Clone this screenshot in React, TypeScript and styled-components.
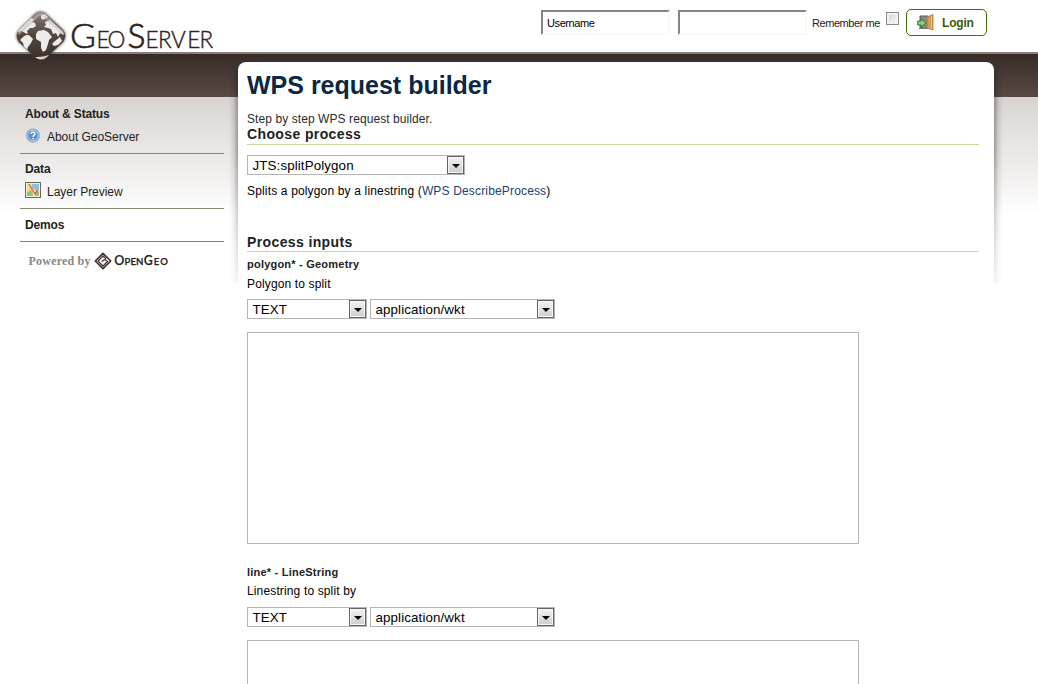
import React from "react";
import styled, { createGlobalStyle } from "styled-components";

const GlobalStyle = createGlobalStyle`
  body { margin: 0; background: #fff; font-family: "Liberation Sans", Arial, sans-serif; font-size: 12px; color: #222; }
  * { box-sizing: border-box; }
  h1, h2, h3, p { margin: 0; }
`;

const Page = styled.div`
  height: 684px;
  overflow: hidden;
  background: linear-gradient(#d8d3d0, #fff) 0 97px / 100% 118px no-repeat,
    linear-gradient(#372b28, #584943) 0 54px / 100% 43px no-repeat, #fff;
`;
const Header = styled.header`
  height: 54px;
  display: flex;
  justify-content: space-between;
  border-bottom: 2px solid #887d7a;
`;
const Logo = styled.svg`
  display: block;
  width: 230px;
  height: 70px;
  flex: none;
  position: relative;
`;
const LoginForm = styled.form`
  display: flex;
  align-items: flex-start;
  padding: 9px 51px 0 0;
`;
const Field = styled.input`
  width: 129px;
  height: 25px;
  margin: 1px 8px 0 0;
  padding: 1px 4px;
  border: 2px solid;
  border-color: #858585 #fafafa #fafafa #858585;
  background: #fff;
  font: 11px "Liberation Sans", Arial, sans-serif;
  letter-spacing: -0.4px;
  color: #000;
  outline: none;
`;
const Remember = styled.label`
  width: 74px;
  margin-left: -3px;
  line-height: 28px;
  font-size: 11px;
  letter-spacing: -0.43px;
  white-space: nowrap;
`;
const Check = styled.span`
  width: 13px;
  height: 13px;
  margin: 3px 7px 0 0;
  border: 1px solid #8e8888;
  background: linear-gradient(135deg, #c9cdd3, #fff);
  box-shadow: inset 0 0 0 2px #f1f1f1;
`;
const LoginButton = styled.button`
  width: 81px;
  height: 27px;
  padding: 0 0 0 10px;
  display: flex;
  align-items: center;
  gap: 7px;
  border: 1px solid #496a08;
  border-radius: 5px;
  background: #fff;
  color: #3d5c03;
  font: bold 12px "Liberation Sans", Arial, sans-serif;
  letter-spacing: -0.2px;
`;
const Body = styled.div`
  display: flex;
  align-items: flex-start;
`;
const Sidebar = styled.nav`
  width: 204px;
  margin: 43px 5px 0 20px;
`;
const Section = styled.section<{ $h: number; $top: number }>`
  height: ${(p) => p.$h}px;
  padding: ${(p) => p.$top}px 0 0 5px;
  border-bottom: 1px solid #83886f;
`;
const SectionTitle = styled.h3`
  font-size: 12px;
  line-height: 16px;
  letter-spacing: -0.15px;
`;
const NavItem = styled.a<{ $top: number }>`
  display: flex;
  align-items: center;
  height: 16px;
  margin-top: ${(p) => p.$top}px;
  gap: 6px;
  letter-spacing: -0.03px;
`;
const NavLabel = styled.span<{ $drop: number }>`
  line-height: 16px;
  padding-top: ${(p) => p.$drop * 2}px;
`;
const Powered = styled.svg`
  display: block;
  width: 160px;
  height: 24px;
  margin: 8px 0 0 5px;
`;
const Shade = styled.div<{ $side: "left" | "right" }>`
  width: 9px;
  height: 221px;
  margin-top: 8px;
  background: linear-gradient(to ${(p) => p.$side}, rgba(30, 24, 20, 0.36), rgba(30, 24, 20, 0.1) 50%, transparent);
  mask-image: linear-gradient(transparent, #000 16px, #000 90px, rgba(0, 0, 0, 0.15));
`;
const Panel = styled.main`
  width: 756px;
  height: 700px;
  margin-top: 8px;
  padding: 0 15px 0 9px;
  border-radius: 8px 8px 0 0;
  background: #fff;
`;
const Title = styled.h1`
  font-size: 25px;
  line-height: 46px;
  color: #0b2744;
`;
const Line = styled.p<{ $top: number; $dark?: boolean; $track?: number }>`
  margin-top: ${(p) => p.$top}px;
  line-height: 16px;
  letter-spacing: ${(p) => p.$track ?? 0.14}px;
  color: ${(p) => (p.$dark ? "#000" : "#2b2b2b")};
`;
const Heading = styled.h2<{ $top?: number; $line?: number }>`
  margin-top: ${(p) => p.$top ?? 0}px;
  height: 18px;
  line-height: ${(p) => p.$line ?? 17}px;
  font-size: 14px;
  letter-spacing: 0.38px;
  border-bottom: 1px solid #c6dd99;
`;
const Link = styled.a`
  color: #1b4175;
`;
const SelectBox = styled.div<{ $w: number }>`
  display: flex;
  width: ${(p) => p.$w}px;
  height: 20px;
  border: 1px solid #b5b5b5;
  background: #fff;
  color: #000;
  font-size: 13.33px;
  letter-spacing: 0.12px;
  line-height: 19px;
  padding-left: 4.5px;
  justify-content: space-between;
`;
const Arrow = styled.span`
  width: 17px;
  height: 18px;
  border: 1px solid #666;
  box-shadow: inset 0 0 0 1px #f7f7f7;
  background: linear-gradient(#f3f3f3, #cdcdcd);
  display: flex;
  align-items: center;
  justify-content: center;
  &::after {
    content: "";
    margin-top: 2px;
    border: 4px solid transparent;
    border-top-color: #000;
    border-bottom: 0;
  }
`;
const SelectRow = styled.div<{ $top: number }>`
  display: flex;
  gap: 3px;
  margin-top: ${(p) => p.$top}px;
`;
const Inputs = styled.div`
  padding-top: 5px;
`;
const Input = styled.section`
  height: 308px;
`;
const InputName = styled.h3`
  font-size: 11px;
  line-height: 15px;
  letter-spacing: 0.22px;
`;
const TextArea = styled.textarea`
  display: block;
  width: 612px;
  height: 212px;
  margin: 13px 0 0;
  border: 1px solid #b5b5b5;
  resize: none;
  outline: none;
`;

const Select = ({ width, value }: { width: number; value: string }) => (
  <SelectBox $w={width}>
    {value}
    <Arrow />
  </SelectBox>
);

const ProcessInput = ({ name, description, shift = 0 }: { name: string; description: string; shift?: number }) => (
  <Input>
    <InputName>{name}</InputName>
    <Line $top={4 - shift} $dark>{description}</Line>
    <SelectRow $top={7 + shift}>
      <Select width={120} value="TEXT" />
      <Select width={185} value="application/wkt" />
    </SelectRow>
    <TextArea />
  </Input>
);

const gem = "M35 14Q40.500 9.500 46 14L63 30Q67.500 35.500 63 42L47 57Q41 62 35 57L19 42Q14.500 35.500 19 30Z";

const GeoServerLogo = () => (
  <Logo viewBox="0 0 230 70">
    <defs>
      <linearGradient id="globe" x1="0" y1="0" x2="0" y2="1">
        <stop offset="0" stopColor="#8d8582" />
        <stop offset=".45" stopColor="#54463f" />
        <stop offset="1" stopColor="#362925" />
      </linearGradient>
      <filter id="soft" x="-20%" y="-20%" width="140%" height="140%">
        <feGaussianBlur stdDeviation="1.3" />
      </filter>
      <clipPath id="gem">
        <path d={gem} />
      </clipPath>
    </defs>
    <path d={gem} fill="#453a36" stroke="#453a36" strokeWidth="1.500" opacity=".65" filter="url(#soft)" />
    <g clipPath="url(#gem)">
      <path d="M10 8H70V66H10Z" fill="url(#globe)" />
      <path d="M18 30L31 18L34 19L32 22L35 23L36 26L33 28L30 28L27 31L28 34L25 33L22 31L18 32Z" fill="#eeecea" />
      <path d="M26 35L29 35L33 39L31 43L28 47L27 50L24 47L23 43L20 40L23 37Z" fill="#eeecea" />
      <path d="M41 15L45 14L48 17L46 18L43 20L41 18Z" fill="#eeecea" />
      <path d="M38 31L44 30L48 32L52 37L49 40L48 44L46 50L43 52L41 48L41 42L36 39L36 34Z" fill="#eeecea" />
      <path d="M44 27L46 25L45 22L50 20L62 31L64 35L60 33L58 37L56 33L53 34L51 29L48 28Z" fill="#eeecea" />
      <path d="M55 41L60 37L62 41L58 45L54 46L52 44Z" fill="#eeecea" />
      <path d="M35 57Q42 57.500 49 55L46 61H37Z" fill="#d6d2cf" />
      <path d="M18 34L38 15Q40.500 13 43 15L64 34" fill="none" stroke="#c3bfbd" strokeWidth="3.500" opacity=".5" />
    </g>
    <g fill="#30241f" stroke="#30241f" fontFamily="Lato" fontWeight="300">
      <text x="70" y="48" fontSize="33.500" strokeWidth=".6" textLength="26" lengthAdjust="spacingAndGlyphs">G</text>
      <text y="48" fontSize="22.500" strokeWidth=".4" x="96.500 107.500">EO</text>
      <text x="127.500" y="48" fontSize="33.500" strokeWidth=".8" textLength="18" lengthAdjust="spacingAndGlyphs">S</text>
      <text y="48" fontSize="22.500" strokeWidth=".4" x="145.500 158 170.900 187.300 199.500">ERVER</text>
    </g>
  </Logo>
);

export default function App() {
  return (
    <Page>
      <GlobalStyle />
      <Header>
        <GeoServerLogo />
        <LoginForm>
          <Field defaultValue="Username" />
          <Field />
          <Remember>Remember me</Remember>
          <Check />
          <LoginButton type="button">
            <svg width="18" height="17" viewBox="0 0 18 17">
              <path d="M3 2H11V14H3Z" fill="#8a8a86" stroke="#5e5e5b" />
              <path d="M2 14.500H12" stroke="#777" />
              <path d="M10 3L16 .5V16L10 14Z" fill="#d89b57" stroke="#ae7235" strokeWidth=".8" />
              <path d="M14.500 2V15" stroke="#f2c58c" />
              <path d="M.7 7H4V4.500L9 9L4 13.300V11H.7Z" fill="#8fcc7b" stroke="#35772d" />
            </svg>
            Login
          </LoginButton>
        </LoginForm>
      </Header>
      <Body>
        <Sidebar>
          <Section $h={57} $top={9}>
            <SectionTitle>About &amp; Status</SectionTitle>
            <NavItem $top={6}>
              <svg width="16" height="16" viewBox="0 0 16 16">
                <circle cx="8" cy="7.500" r="6.700" fill="#5b92cc" stroke="#a3bede" />
                <circle cx="8" cy="7.500" r="5.300" fill="none" stroke="#dfeaf7" strokeWidth=".8" />
                <path d="M6 6Q6.200 4.300 8 4.300T10 6Q9.800 7 8.200 7.800V9M8.200 9.900V11.200" fill="none" stroke="#fff" strokeWidth="1.400" />
              </svg>
              <NavLabel $drop={1}>About GeoServer</NavLabel>
            </NavItem>
          </Section>
          <Section $h={55} $top={7}>
            <SectionTitle>Data</SectionTitle>
            <NavItem $top={5}>
              <svg width="16" height="16" viewBox="0 0 16 16">
                <path d="M0 0H16V16H0Z" fill="#616c59" />
                <path d="M1 1H15V15H1Z" fill="#f3edd6" />
                <path d="M2 2H7V8H2Z" fill="#efe08a" />
                <path d="M7 2H14V8L11 9L7 6Z" fill="#94bde0" />
                <path d="M2 10L7 8L8 14H2ZM11 11L14 9V14H10Z" fill="#8fc27a" />
                <path d="M2 9L6 8L9 11L14 7" fill="none" stroke="#e9c65c" />
                <path d="M4 2L7 7L10 12L13 8" fill="none" stroke="#dd6040" strokeWidth="1.300" />
              </svg>
              <NavLabel $drop={2}>Layer Preview</NavLabel>
            </NavItem>
          </Section>
          <Section $h={33} $top={8}>
            <SectionTitle>Demos</SectionTitle>
          </Section>
          <Powered viewBox="25 250 160 24">
            <text x="28.500" y="265" fontFamily="Liberation Serif" fontWeight="bold" fontSize="12" fill="#8c8580" textLength="62">Powered by</text>
            <path d="M103 253.300L110.700 261L103 268.700L95.300 261Z" fill="#fff" stroke="#40342f" strokeWidth="1.700" strokeLinejoin="round" />
            <path d="M106 258.700L103 256L98 261L103 266L107.500 261.500L105 259.500L101.500 261.500" fill="none" stroke="#40342f" strokeWidth="1.300" />
            <g fontFamily="Lato" fontWeight="600" fill="#2b211e" stroke="#2b211e" strokeWidth=".25">
              <text x="114.200" y="265" fontSize="12.500">O</text>
              <text x="124.600" y="265" fontSize="9.500" textLength="18.800" lengthAdjust="spacingAndGlyphs">PEN</text>
              <text x="143.800" y="265" fontSize="12.500" textLength="9" lengthAdjust="spacingAndGlyphs">G</text>
              <text x="153.700" y="265" fontSize="9.500" textLength="14.300">EO</text>
            </g>
          </Powered>
        </Sidebar>
        <Shade $side="left" />
        <Panel>
          <Title>WPS request builder</Title>
          <Line $top={3} $track={0.08}>Step by step WPS request builder.</Line>
          <Heading $line={15}>Choose process</Heading>
          <SelectRow $top={10}>
            <Select width={218} value="JTS:splitPolygon" />
          </SelectRow>
          <Line $top={8} $dark $track={0.16}>
            Splits a polygon by a linestring (<Link>WPS DescribeProcess</Link>)
          </Line>
          <Heading $top={35}>Process inputs</Heading>
          <Inputs>
            <ProcessInput name="polygon* - Geometry" description="Polygon to split" />
            <ProcessInput name="line* - LineString" description="Linestring to split by" shift={1} />
          </Inputs>
        </Panel>
        <Shade $side="right" />
      </Body>
    </Page>
  );
}
